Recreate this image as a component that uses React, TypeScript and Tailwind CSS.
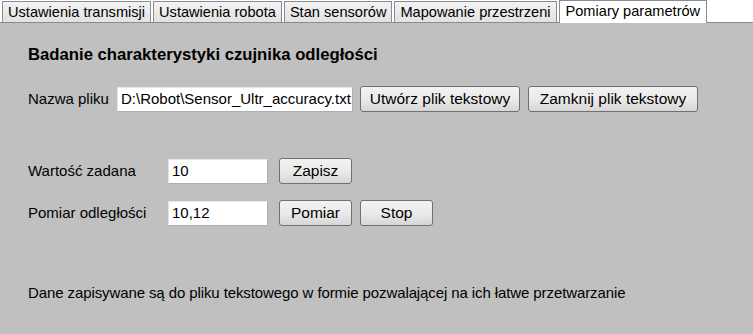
export default function App() {
  const tabs = [
    "Ustawienia transmisji",
    "Ustawienia robota",
    "Stan sensorów",
    "Mapowanie przestrzeni",
  ]

  const btn =
    "h-[26px] rounded-[3px] border border-[#707070] bg-gradient-to-b from-[#f2f2f2] via-[#ebebeb] to-[#d6d6d6] text-[15.5px] text-black leading-none flex items-center justify-center"
  const input =
    "h-[25px] bg-white border border-[#abadb3] border-t-[#e3e9ef] border-l-[#e2e3ea] px-[3px] text-[15px] text-black flex items-center"

  return (
    <div
      className="w-[753px] h-[334px] overflow-hidden bg-[#c0c0c0] flex flex-col"
      style={{ fontFamily: '"Liberation Sans", Arial, sans-serif' }}
    >
      {/* tab strip */}
      <div className="h-[23px] bg-white flex items-end pl-[2px] gap-[2px] border-b border-[#898c95] relative">
        {tabs.map((t) => (
          <div
            key={t}
            className="h-[21px] px-[5px] border border-b-0 border-[#898c95] bg-gradient-to-b from-[#f3f3f3] to-[#e2e2e2] text-[14.6px] leading-[20px] text-black whitespace-nowrap"
          >
            {t}
          </div>
        ))}
        <div className="h-[23px] -mb-px px-[6px] border border-b-0 border-[#898c95] bg-white text-[14.6px] leading-[20px] text-black whitespace-nowrap">
          Pomiary parametrów
        </div>
      </div>

      {/* page */}
      <div className="flex-1 pl-[28px] pt-[22px]">
        <h2 className="text-[16.7px] font-bold text-black leading-[20px]">
          Badanie charakterystyki czujnika odległości
        </h2>

        <div className="mt-[21px] flex items-center">
          <span className="w-[89px] text-[15px] text-black">Nazwa pliku</span>
          <div className={`${input} w-[236px] overflow-hidden whitespace-nowrap text-[15.5px]`}>
            D:\Robot\Sensor_Ultr_accuracy.txt
          </div>
          <button className={`${btn} ml-[7px] w-[160px]`}>Utwórz plik tekstowy</button>
          <button className={`${btn} ml-[8px] w-[170px]`}>Zamknij plik tekstowy</button>
        </div>

        <div className="mt-[46px] flex items-center">
          <span className="w-[140px] text-[15px] text-black">Wartość zadana</span>
          <div className={`${input} w-[100px] h-[24px]`}>10</div>
          <button className={`${btn} ml-[11px] w-[73px]`}>Zapisz</button>
        </div>

        <div className="mt-[16px] flex items-center">
          <span className="w-[140px] text-[15px] text-black">Pomiar odległości</span>
          <div className={`${input} w-[100px] h-[24px] border-[#3c7fb1]`}>10,12</div>
          <button className={`${btn} ml-[11px] w-[73px]`}>Pomiar</button>
          <button className={`${btn} ml-[8px] w-[73px]`}>Stop</button>
        </div>

        <p className="mt-[56px] text-[15px] text-black tracking-[-0.1px]">
          Dane zapisywane są do pliku tekstowego w formie pozwalającej na ich łatwe przetwarzanie
        </p>
      </div>
    </div>
  )
}
